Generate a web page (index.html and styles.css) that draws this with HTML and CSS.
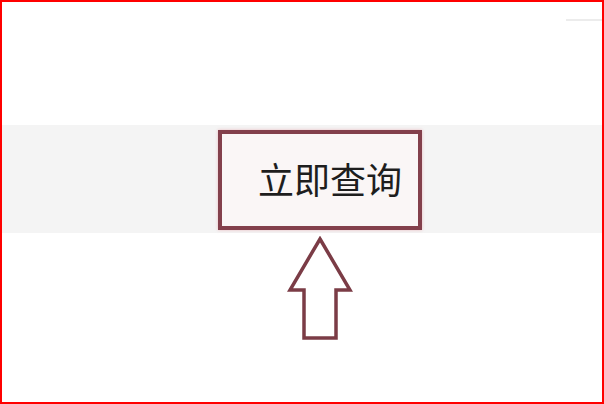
FILE: index.html
```html
<!DOCTYPE html>
<html lang="zh-CN">
  <head>
    <meta charset="utf-8" />
    <title>立即查询</title>
    <link rel="stylesheet" href="styles.css">
  </head>
  <body>
    <div class="frame">
      <div class="top">
        <span class="rule"></span>
      </div>
      <div class="band">
        <div class="query-btn">立即查询</div>
      </div>
      <div class="pointer">
        <svg width="66" height="106" viewBox="0 0 66 106">
          <path d="M33 3 L63 54 L49 54 L49 102 L17 102 L17 54 L3 54 Z"
                fill="#fff" stroke="#7b3c46" stroke-width="3.5" stroke-linejoin="miter" />
        </svg>
      </div>
    </div>
  </body>
</html>
```

FILE: styles.css
```css
body {
  margin: 0;
  background: #fff;
  font-family: "Noto Sans CJK SC", "Noto Sans", sans-serif;
}

.frame {
  box-sizing: border-box;
  width: 604px;
  height: 404px;
  border: 2px solid #f00;
  overflow: hidden;
}

.top {
  height: 123px;
  display: flex;
  justify-content: flex-end;
}

.rule {
  display: block;
  width: 36px;
  height: 2px;
  margin-top: 17px;
  background: #ececec;
}

.band {
  height: 108px;
  background: #f4f4f4;
  padding: 5px 0 0 216px;
  box-sizing: border-box;
}

.query-btn {
  box-sizing: border-box;
  width: 204px;
  height: 100px;
  border: 4px solid #83404c;
  background: #faf6f6;
  box-shadow: 0 0 3px rgba(230, 150, 160, 0.6);
  display: flex;
  align-items: center;
  padding: 0 0 5px 36px;
  font-size: 36px;
  color: #1e1e1e;
}

.pointer {
  padding: 3px 0 0 285px;
}

.pointer svg {
  display: block;
}
```
